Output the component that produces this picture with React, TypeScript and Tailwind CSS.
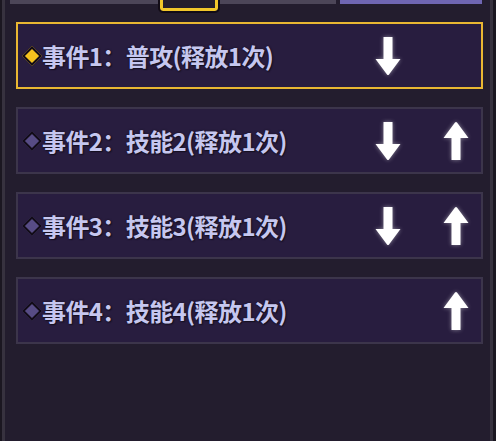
import React from 'react';

type EventItem = {
  id: number;
  label: string;
  down: boolean;
  up: boolean;
};

const events: EventItem[] = [
  { id: 1, label: '事件1：普攻(释放1次)', down: true, up: false },
  { id: 2, label: '事件2：技能2(释放1次)', down: true, up: true },
  { id: 3, label: '事件3：技能3(释放1次)', down: true, up: true },
  { id: 4, label: '事件4：技能4(释放1次)', down: false, up: true },
];

function Arrow({ dir, show }: { dir: 'up' | 'down'; show: boolean }) {
  return (
    <div className="flex h-[40px] w-[26px] items-center justify-center">
      {show && (
        <svg
          width="26"
          height="40"
          viewBox="0 0 26 40"
          className={dir === 'up' ? 'rotate-180 drop-shadow-[0_0_2px_rgba(255,255,255,0.45)]' : 'drop-shadow-[0_0_2px_rgba(255,255,255,0.45)]'}
        >
          <path d="M8.5 1 H17.5 V23 H25.5 L14 38.5 Q13 39.6 12 38.5 L0.5 23 H8.5 Z" fill="#ffffff" />
        </svg>
      )}
    </div>
  );
}

function EventRow({ item, active }: { item: EventItem; active: boolean }) {
  return (
    <div
      className={
        active
          ? 'flex h-[67px] items-center border-2 border-[#e9b732] bg-[#281d3f] pl-[4px] pr-[12px]'
          : 'flex h-[67px] items-center border-2 border-[#3c354b] bg-[#281d3f] pl-[4px] pr-[12px]'
      }
    >
      <div
        className={
          active
            ? 'ml-[3px] h-[14px] w-[14px] shrink-0 rotate-45 border-2 border-[#120c18] bg-[#f4c21e]'
            : 'ml-[3px] h-[14px] w-[14px] shrink-0 rotate-45 border-2 border-[#120c18] bg-[#574c85]'
        }
      />
      <span className="ml-[3px] flex-1 whitespace-nowrap font-['Noto_Sans_CJK_SC',sans-serif] text-[24px] font-bold tracking-[-0.6px] text-[#c6c7ef] [text-shadow:0_0_2px_#15101f,1px_1px_1px_#15101f]">
        {item.label}
      </span>
      <div className="flex items-center gap-[42px]">
        <Arrow dir="down" show={item.down} />
        <Arrow dir="up" show={item.up} />
      </div>
    </div>
  );
}

export default function App() {
  return (
    <div className="relative h-[441px] w-[496px] overflow-hidden bg-[#1b1721]">
      <div className="ml-[2px] mr-[3px] flex h-full flex-col border-l-[3px] border-r-[3px] border-[#37323f] bg-[#231d2e]">
        <div className="flex h-[4px] shrink-0">
          <div className="ml-[5px] w-[326px] bg-[#4c4658]" />
          <div className="ml-[4px] w-[142px] bg-[#6f66b2]" />
        </div>
        <div className="flex flex-col gap-[18px] pl-[11px] pr-[7px] pt-[18px]">
          {events.map((item, i) => (
            <EventRow key={item.id} item={item} active={i === 0} />
          ))}
        </div>
      </div>
      {/* bottom of the tab icon that hangs over the list */}
      <div className="absolute left-[160px] top-[-6px] h-[17px] w-[58px] rounded-[3px] border-[3px] border-[#f1c62a] bg-[#241d2c] outline outline-2 outline-[#120c16]" />
    </div>
  );
}
